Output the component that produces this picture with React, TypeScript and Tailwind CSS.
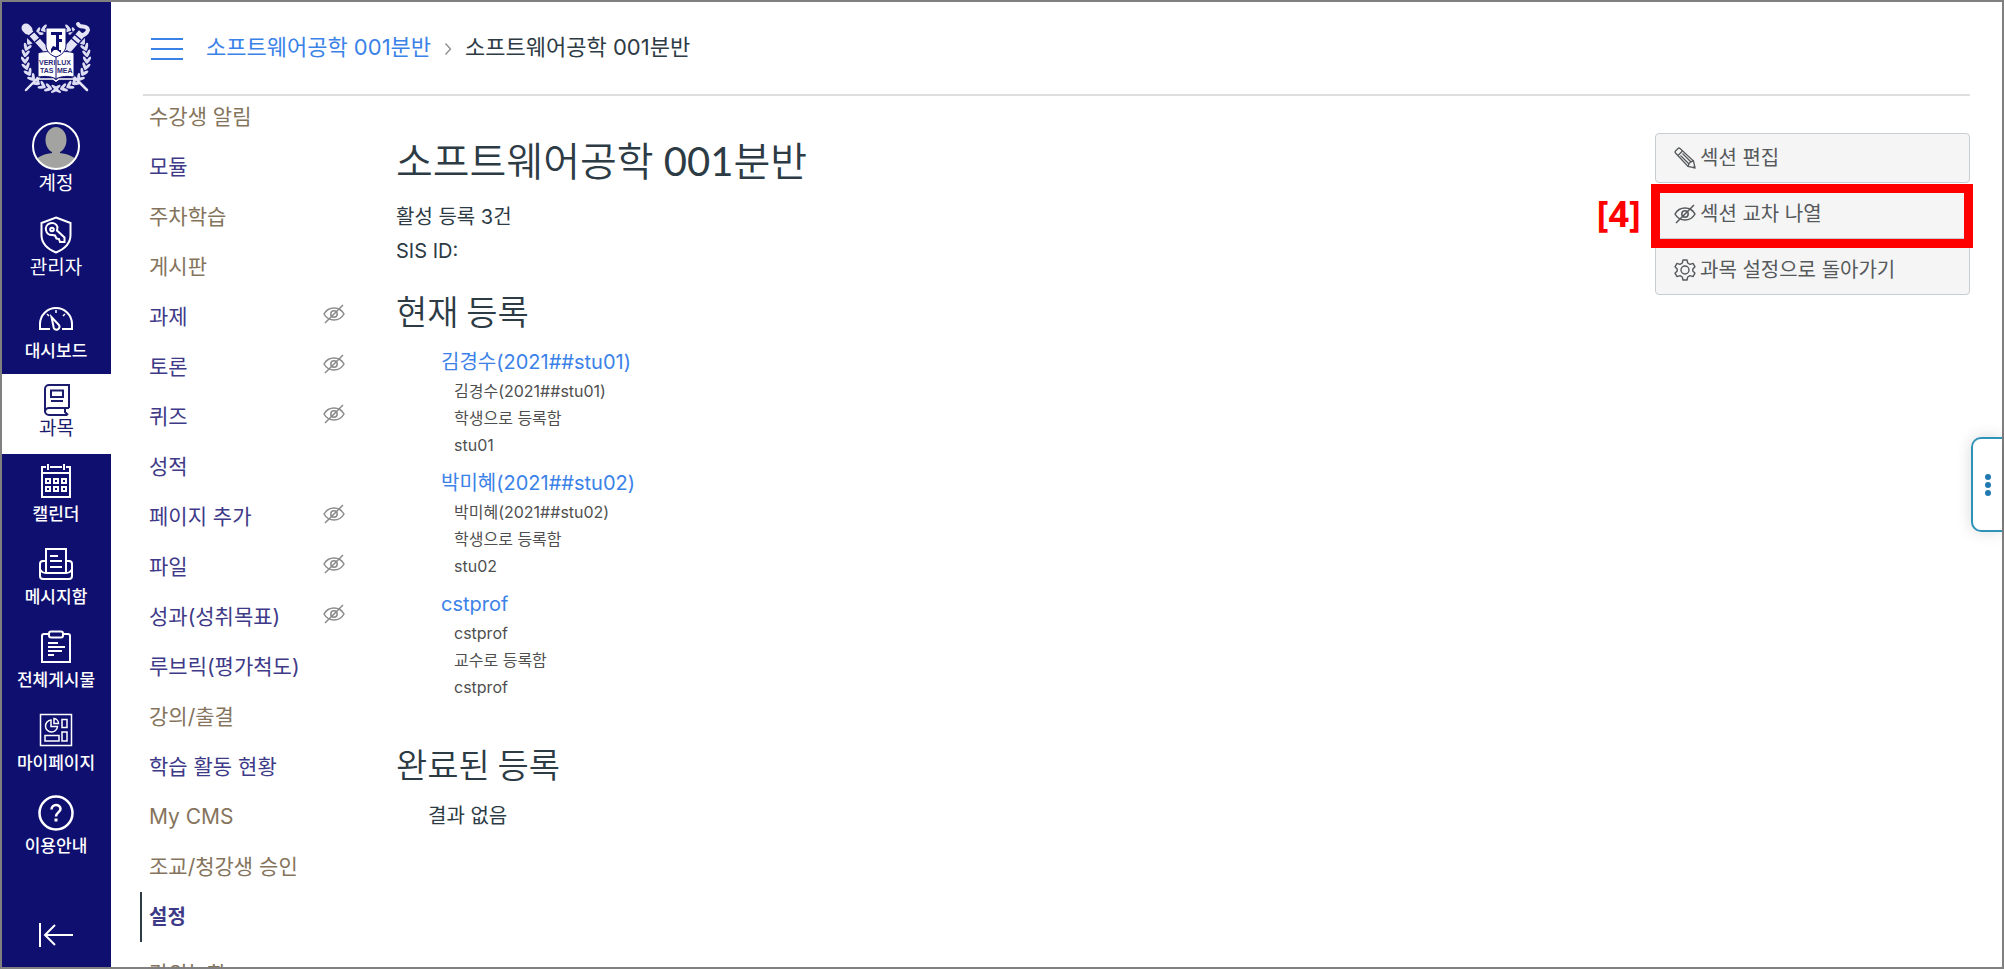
import type { ReactNode } from 'react'

interface GlobalItem {
  label: string
  icon: ReactNode
  active?: boolean
  large?: boolean
}

interface CourseItem {
  label: string
  tone: 'brown' | 'indigo'
  hidden?: boolean
  active?: boolean
}

interface Person {
  name: string
  lines: string[]
}

const globalItems: GlobalItem[] = [
  { label: '관리자', icon: <ShieldKeyIcon />, large: true },
  { label: '대시보드', icon: <GaugeIcon /> },
  { label: '과목', icon: <BookIcon />, active: true, large: true },
  { label: '캘린더', icon: <CalendarIcon /> },
  { label: '메시지함', icon: <InboxIcon /> },
  { label: '전체게시물', icon: <ClipboardIcon /> },
  { label: '마이페이지', icon: <MyPageIcon /> },
  { label: '이용안내', icon: <HelpIcon /> },
]

const courseItems: CourseItem[] = [
  { label: '수강생 알림', tone: 'brown' },
  { label: '모듈', tone: 'indigo' },
  { label: '주차학습', tone: 'brown' },
  { label: '게시판', tone: 'brown' },
  { label: '과제', tone: 'indigo', hidden: true },
  { label: '토론', tone: 'indigo', hidden: true },
  { label: '퀴즈', tone: 'indigo', hidden: true },
  { label: '성적', tone: 'indigo' },
  { label: '페이지 추가', tone: 'indigo', hidden: true },
  { label: '파일', tone: 'indigo', hidden: true },
  { label: '성과(성취목표)', tone: 'indigo', hidden: true },
  { label: '루브릭(평가척도)', tone: 'indigo' },
  { label: '강의/출결', tone: 'brown' },
  { label: '학습 활동 현황', tone: 'indigo' },
  { label: 'My CMS', tone: 'brown' },
  { label: '조교/청강생 승인', tone: 'brown' },
  { label: '설정', tone: 'indigo', active: true },
  { label: '강의녹화', tone: 'brown' },
]

const people: Person[] = [
  { name: '김경수(2021##stu01)', lines: ['김경수(2021##stu01)', '학생으로 등록함', 'stu01'] },
  { name: '박미혜(2021##stu02)', lines: ['박미혜(2021##stu02)', '학생으로 등록함', 'stu02'] },
  { name: 'cstprof', lines: ['cstprof', '교수로 등록함', 'cstprof'] },
]

export default function App() {
  return (
    <div className="flex h-screen overflow-hidden border-2 border-[#808080] bg-white font-['Inter','Noto_Sans_CJK_KR',sans-serif] text-[#2d3b45]">
      <GlobalNav />
      <div className="flex min-w-0 flex-1 flex-col pl-8 pr-8">
        <header className="flex h-[94px] shrink-0 items-center border-b-2 border-[#dedede] pb-0.5 pl-2">
          <button aria-label="과목 탐색 메뉴" className="mt-1 flex h-8 w-8 flex-col justify-center gap-2">
            <span className="h-0.5 w-full bg-[#3b82e8]" />
            <span className="h-0.5 w-full bg-[#3b82e8]" />
            <span className="h-0.5 w-full bg-[#3b82e8]" />
          </button>
          <nav aria-label="이동 경로" className="ml-[23px] flex items-center text-[22px] leading-8">
            <a href="#" className="text-[#3b82e8]">소프트웨어공학 001분반</a>
            <svg viewBox="0 0 8 12" className="mx-[13px] mt-1 h-3 w-2" fill="none" stroke="#8b8b8b" strokeWidth="1.3">
              <path d="M1.500 0.500 6.500 6l-5 5.500" />
            </svg>
            <span>소프트웨어공학 001분반</span>
          </nav>
        </header>
        <div className="flex min-h-0 flex-1">
          <CourseNav />
          <Main />
          <SectionActions />
        </div>
      </div>
      <button
        aria-label="더 보기"
        className="fixed right-0.5 top-[437px] flex h-[95px] w-[31px] flex-col items-center justify-center gap-0.5 rounded-l-[10px] border-2 border-r-0 border-[#2f93b8] bg-white shadow-[0_0_16px_rgba(0,0,0,0.15)]"
      >
        <span className="size-1.5 rounded-full bg-[#1f78b0]" />
        <span className="size-1.5 rounded-full bg-[#1f78b0]" />
        <span className="size-1.5 rounded-full bg-[#1f78b0]" />
      </button>
    </div>
  )
}

function GlobalNav() {
  return (
    <nav aria-label="전체 탐색" className="flex w-[109px] shrink-0 flex-col bg-[#0f0f70] pr-px text-white">
      <a href="#" aria-label="홈" className="flex h-[120px] justify-center pt-[18px]">
        <Emblem />
      </a>
      <a href="#" className="flex h-[86px] flex-col items-center gap-0.5 text-[19px] leading-6">
        <Avatar />
        <span>계정</span>
      </a>
      {globalItems.map((item) => (
        <a
          key={item.label}
          href="#"
          className={`flex flex-col items-center gap-[3px] leading-6 ${
            item.active ? '-mr-px h-20 bg-white pt-2 text-[#1c1c6e]' : 'h-[83px] pt-[9px]'
          } ${item.large ? 'text-[19px]' : 'text-[17px] font-medium'}`}
        >
          <span className="flex h-9 shrink-0 items-center">{item.icon}</span>
          <span className={item.active ? '-mt-1' : ''}>{item.label}</span>
        </a>
      ))}
      <button aria-label="탐색 메뉴 접기" className="mb-4 mt-auto flex justify-center pb-[3px]">
        <svg viewBox="0 0 36 26" className="h-[26px] w-9" fill="none" stroke="currentColor" strokeWidth="2">
          <path d="M2 1v24M35 13H7M17 3 7 13l10 10" />
        </svg>
      </button>
    </nav>
  )
}

function CourseNav() {
  return (
    <nav aria-label="과목 탐색" className="w-[222px] shrink-0 pt-1.5">
      <ul className="flex flex-col gap-5">
        {courseItems.map((item) => (
          <li
            key={item.label}
            className={
              item.active
                ? '-mb-[3px] -ml-[3px] -mt-2.5 border-l-2 border-[#2d3b45] py-2.5 pl-[7px]'
                : 'pl-1.5'
            }
          >
            <a
              href="#"
              className={`flex h-[30px] items-center justify-between pr-5 leading-[30px] ${
                item.active ? 'text-[20px] font-bold' : 'text-[21px]'
              } ${item.tone === 'brown' ? 'text-[#85745c]' : 'text-[#3e3a88]'}`}
            >
              {item.label}
              {item.hidden && <EyeOffIcon className="mb-1.5 h-5 w-[22px] text-[#8b8b8b]" />}
            </a>
          </li>
        ))}
      </ul>
    </nav>
  )
}

function Main() {
  return (
    <main className="min-w-0 flex-1 pl-[31px] pt-9">
      <h1 className="font-['Lato','Noto_Sans_CJK_KR_DemiLight','Noto_Sans_CJK_KR',sans-serif] text-[40px] font-normal leading-[58px]">
        소프트웨어공학 001분반
      </h1>
      <div className="mt-2.5 text-[20px] leading-[34px]">
        <p>활성 등록 3건</p>
        <p>SIS ID:</p>
      </div>
      <h2 className="mt-5 font-['Noto_Sans_CJK_KR_DemiLight','Noto_Sans_CJK_KR',sans-serif] text-[34px] font-normal leading-[46px]">
        현재 등록
      </h2>
      <ul className="mt-3 flex flex-col gap-2 pl-[45px]">
        {people.map((person) => (
          <li key={person.name}>
            <a href="#" className="block text-[20px] leading-8 text-[#3b82e8]">
              {person.name}
            </a>
            <div className="pl-[13px] text-[16px] leading-[27px] text-[#4f4f4f]">
              {person.lines.map((line, i) => (
                <p key={i}>{line}</p>
              ))}
            </div>
          </li>
        ))}
      </ul>
      <h2 className="mt-10 font-['Noto_Sans_CJK_KR_DemiLight','Noto_Sans_CJK_KR',sans-serif] text-[34px] font-normal leading-[46px]">
        완료된 등록
      </h2>
      <p className="mt-3 pl-8 text-[20px] leading-[34px]">결과 없음</p>
    </main>
  )
}

function SectionActions() {
  const buttonClass =
    'flex h-[50px] w-full items-center gap-1 rounded border border-[#c7cdd1] bg-[#f5f5f5] px-[18px] text-[20px] text-[#55595c]'

  return (
    <aside className="flex w-[315px] shrink-0 flex-col gap-1.5 pt-[37px]">
      <button className={buttonClass}>
        <PencilIcon />
        섹션 편집
      </button>
      <div className="relative">
        <button className={buttonClass}>
          <EyeOffIcon className="h-5 w-[22px]" />
          섹션 교차 나열
        </button>
        <span className="pointer-events-none absolute -bottom-[9px] -left-1 -right-[3px] -top-[5px] border-[9px] border-[#ff0000]" />
        <span className="absolute right-full top-1/2 mr-3.5 -translate-y-1/2 font-['Noto_Sans'] text-[36px] font-bold leading-10 text-[#ff0000]">
          [4]
        </span>
      </div>
      <button className={buttonClass}>
        <GearIcon />
        과목 설정으로 돌아가기
      </button>
    </aside>
  )
}

function Avatar() {
  return (
    <svg viewBox="0 0 48 48" className="size-12">
      <defs>
        <clipPath id="avatar-clip">
          <circle cx="24" cy="24" r="22.5" />
        </clipPath>
      </defs>
      <g clipPath="url(#avatar-clip)" fill="#a3a3a1">
        <ellipse cx="24" cy="18" rx="10.5" ry="13" />
        <path d="M20 26h8v5c8 1 14 4 17 7v10H3V38c3-3 9-6 17-7z" />
      </g>
      <circle cx="24" cy="24" r="23" fill="none" stroke="#fff" strokeWidth="2" />
    </svg>
  )
}

// Laurel leaves run down each side of the emblem in pairs.
const leafAngles = [20, 32, 44, 56, 68, 80, 92, 104, 116, 128, 140, 152, 164, 176]

function Emblem() {
  return (
    <svg viewBox="0 0 70 74" className="h-[74px] w-[70px]">
      {[1, -1].map((side) => (
        <g key={side} transform={`translate(35 38) scale(${side} 1)`} fill="#dcdcf2">
          {leafAngles.map((angle) => (
            <g key={angle} transform={`rotate(${angle}) translate(0 -31)`}>
              <ellipse cx="0" cy="-1.8" rx="4" ry="1.5" transform="rotate(32)" />
              <ellipse cx="0" cy="1.8" rx="4" ry="1.5" transform="rotate(-32)" />
            </g>
          ))}
        </g>
      ))}
      <g fill="none" stroke="#0f0f70">
        <path d="M4 8l22 22" strokeWidth="11" />
        <path d="M66 6 46 28" strokeWidth="13" />
      </g>
      <g fill="none" stroke="#e4e4f6" strokeLinecap="round">
        <path d="M20 24 66 70" strokeWidth="2.500" />
        <path d="M50 24 5 70" strokeWidth="2.500" />
        <path d="M6 9l20 22" strokeWidth="6" />
        <path d="M5 8l2 2" strokeWidth="9" />
        <path d="M61 13 46 30" strokeWidth="8" strokeLinecap="butt" />
        <path d="M57 4c2 5 9 0 10 6-1 4-5 6-9 5" strokeWidth="4" />
      </g>
      <path d="M53 14l7 6M50 18l7 6M8 16l6-5M14 22l6-5" stroke="#0f0f70" strokeWidth="1.500" />
      <path d="M17 33c6-2 13-2 18 1 5-3 12-3 18-1v24c-6-1-13-1-18 2-5-3-12-3-18-2z" fill="#fff" stroke="#0f0f70" />
      <path d="M17 59h15l3 2 3-2h15" fill="none" stroke="#fff" strokeWidth="1.500" />
      <path d="M35 34v24" stroke="#0f0f70" />
      <g fill="#2a2a78" className="font-['Liberation_Sans'] text-[7px] font-bold">
        <text x="18" y="45">VERI</text>
        <text x="36" y="45">LUX</text>
        <text x="19" y="53">TAS</text>
        <text x="36" y="53">MEA</text>
      </g>
      <path d="M25 8h20v17c0 6-4 10-10 12-6-2-10-6-10-12z" fill="#fff" stroke="#0f0f70" />
      <path d="M30 12h11v3h-3v4h3v3h-3v8h2v3l-4-3h-3l-3 3v-4l2-3 3 1V15h-5z" fill="#0f0f70" />
    </svg>
  )
}

function ShieldKeyIcon() {
  return (
    <svg viewBox="0 0 32 38" className="h-[38px] w-8" fill="none" stroke="currentColor" strokeWidth="2">
      <path d="M16 1.500 30.500 7v12c0 9-6 14-14.500 17.500C7.500 33 1.500 28 1.500 19V7z" />
      <path d="M17.500 11a6 6 0 1 0-5 8l2.500.5 1.500 3 2.500.5 1 3h4.500v-4.500l-7.500-7z" />
      <circle cx="12" cy="13.500" r="1.800" />
    </svg>
  )
}

function GaugeIcon() {
  return (
    <svg viewBox="0 0 36 26" className="h-[26px] w-9" fill="none" stroke="currentColor" strokeWidth="2">
      <path d="M12 24H2v-5a16 16 0 0 1 32 0v5H24" />
      <path d="M13.500 12l2 9.500a3 3 0 1 0 5-2z" />
      <path d="M18 5v3M9 9l2 2M27 9l-2 2" strokeWidth="1.500" />
    </svg>
  )
}

function BookIcon() {
  return (
    <svg viewBox="0 0 28 34" className="h-[34px] w-7" fill="none" stroke="currentColor" strokeWidth="2">
      <path d="M26 25V2H6a4 4 0 0 0-4 4v22a4 4 0 0 0 4 4h18" />
      <path d="M2 29a4 4 0 0 1 4-4h20M22 25v4l3 3" />
      <path d="M8 7.500h12v6.500H8zM8 18h12" />
    </svg>
  )
}

function CalendarIcon() {
  return (
    <svg viewBox="0 0 32 36" className="h-9 w-8" fill="none" stroke="currentColor" strokeWidth="2">
      <path d="M6 4H2v30h28V4h-4M10 4h12M2 10h28M8 1v6M24 1v6" />
      <path d="M6 16h4v4H6zM14 16h4v4h-4zM22 16h4v4h-4zM6 24h4v4H6zM14 24h4v4h-4zM22 24h4v4h-4z" />
    </svg>
  )
}

function InboxIcon() {
  return (
    <svg viewBox="0 0 36 34" className="h-[34px] w-9" fill="none" stroke="currentColor" strokeWidth="2">
      <path d="M8 14H5a3 3 0 0 0-3 3v12a3 3 0 0 0 3 3h26a3 3 0 0 0 3-3V17a3 3 0 0 0-3-3h-3" />
      <path d="M8 26V2h20v24M2 22c1 2.500 3 4 6 4h20c3 0 5-1.500 6-4" />
      <path d="M12 9h8M12 14h12M12 20h12" />
    </svg>
  )
}

function ClipboardIcon() {
  return (
    <svg viewBox="0 0 32 34" className="h-[34px] w-8" fill="none" stroke="currentColor" strokeWidth="2">
      <path d="M9 4H4a2 2 0 0 0-2 2v26h28V6a2 2 0 0 0-2-2h-5" />
      <rect x="9" y="1.500" width="14" height="6" rx="2" />
      <path d="M8 13h10M8 17h17M8 21h14M8 25h6" />
    </svg>
  )
}

function MyPageIcon() {
  return (
    <svg viewBox="0 0 34 34" className="size-[34px]" fill="none" stroke="currentColor" strokeWidth="1.500">
      <path d="M1.500 1.500h31v31h-31z" />
      <path d="M12 7a6 6 0 1 0 6.500 6.500H12z" />
      <path d="M15 5.500v5h4.500a5 5 0 0 0-4.500-5zM23 6.500h5v8h-5zM23 19h5v9h-5zM6 22.500h14V28H6z" />
    </svg>
  )
}

function HelpIcon() {
  return (
    <svg viewBox="0 0 36 36" className="size-9" fill="none" stroke="currentColor" strokeWidth="2">
      <circle cx="18" cy="18" r="16.500" strokeWidth="2.500" />
      <path d="M13.500 14.500c0-6 9-6 9-.500 0 3-4.500 3.500-4.500 7.500" strokeWidth="2.500" />
      <path d="M16.500 23.500h3v3h-3z" fill="currentColor" stroke="none" />
    </svg>
  )
}

function EyeOffIcon({ className }: { className: string }) {
  return (
    <svg viewBox="0 0 22 20" className={`shrink-0 ${className}`} fill="none" stroke="currentColor" strokeWidth="1.500">
      <path d="M1 10c4.500-8 15.500-8 20 0-4.500 8-15.500 8-20 0z" />
      <circle cx="11" cy="10" r="3.200" />
      <path d="M2 19 20 1M9.500 11.500l3-3" />
    </svg>
  )
}

function PencilIcon() {
  return (
    <svg viewBox="0 0 22 22" className="size-[22px] shrink-0" fill="none" stroke="currentColor" strokeWidth="1.300">
      <path d="M1.500 4 4 1.500a1.500 1.500 0 0 1 2 0L19.500 14l1.500 7-7-1.500L1.500 6a1.500 1.500 0 0 1 0-2z" />
      <path d="M4 8.500 8.500 4M6.500 8.500l9 9M8.500 6.500l9 9M14 19.500l1-3 2-2 3-.500M19 21l2-2" />
    </svg>
  )
}

function GearIcon() {
  return (
    <svg viewBox="0 0 22 22" className="size-[22px] shrink-0" fill="none" stroke="currentColor" strokeWidth="1.400" strokeLinejoin="round">
      <path d="M9 1h4l.7 3 2.300 1.300 3-.9 2 3.400L18.800 10v2l2.200 2.200-2 3.400-3-.9-2.300 1.300L13 21H9l-.7-3L6 16.700l-3 .9-2-3.400L3.200 12v-2L1 7.800l2-3.400 3 .9L8.300 4z" />
      <circle cx="11" cy="11" r="4" />
    </svg>
  )
}
